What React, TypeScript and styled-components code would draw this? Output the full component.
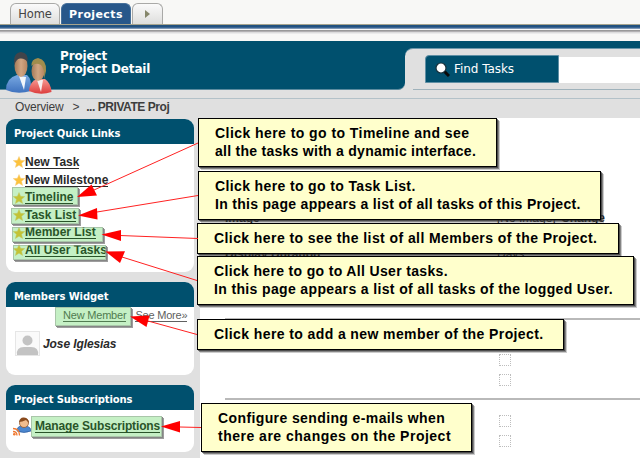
import React from "react";
import styled, { createGlobalStyle } from "styled-components";

const Global = createGlobalStyle`
  * { box-sizing: border-box; }
  body { margin: 0; background: #fff; overflow: hidden; }
`;

const Page = styled.div`
  position: relative;
  width: 640px;
  height: 458px;
  overflow: hidden;
  display: flex;
  flex-direction: column;
  background: #e0e0e0;
  font-family: "Liberation Sans", Arial, sans-serif;
  font-size: 12px;
  color: #2a2a2a;
`;

const TabBar = styled.nav`
  height: 24px;
  flex: none;
  display: flex;
  align-items: flex-end;
  gap: 1px;
  padding-left: 10px;
  background: #f8f8f6;
`;

const Tab = styled.div<{ $w: number; $active?: boolean }>`
  width: ${(p) => p.$w}px;
  height: 21px;
  display: flex;
  align-items: center;
  justify-content: center;
  border: 1px solid ${(p) => (p.$active ? "#456f9a" : "#a9a9a7")};
  border-bottom: 0;
  border-radius: 6px 6px 0 0;
  background: ${(p) => (p.$active ? "#27578a" : "linear-gradient(#fafafa, #dededc)")};
  color: ${(p) => (p.$active ? "#fff" : "#444")};
  font: ${(p) => (p.$active ? "bold 11px" : "11.5px")} "DejaVu Sans", sans-serif;
  letter-spacing: ${(p) => (p.$active ? "0.4px" : "-0.1px")};
`;

const Rule = styled.div`
  height: 17px;
  flex: none;
  background: linear-gradient(
    #a6a48e 0 1px, #23527f 1px 3px, #3a6594 3px 4px, #7d97b5 4px 5px, #f8f8f8 5px 6px,
    #999 6px 7px, #b2b0b2 7px 8px, #dcdcdc 8px 9px, #ebebeb 9px 10px, #f8f8f6 10px
  );
`;

const Header = styled.header`
  height: 49px;
  flex: none;
  display: flex;
  background: linear-gradient(#00506e 0 24px, #e0e0e0 24px);
`;

const TitleBox = styled.div`
  width: 405px;
  height: 49px;
  display: flex;
  gap: 8px;
  padding-left: 4px;
  background: #00506e;
  border-bottom: 1px solid #5b8b9f;
  border-radius: 0 0 7px 0;
`;

const Title = styled.h1`
  margin: 9px 0 0;
  color: #fff;
  font: bold 12px/13px "DejaVu Sans", sans-serif;
  letter-spacing: -0.15px;
`;

const SearchArea = styled.div`
  flex: 1;
  margin-top: 7px;
  padding: 6px 0 0 20px;
  display: flex;
  background: linear-gradient(#9fb2bb, #9fb2bb) 8px 100% / 100% 1px no-repeat, #e0e0e0;
  border-top: 1px solid #6d98ab;
  border-radius: 8px 0 0 0;
`;

const SearchLabel = styled.div`
  width: 134px;
  height: 28px;
  display: flex;
  align-items: center;
  gap: 4px;
  padding-left: 9px;
  background: #00506e;
  border: 1px solid #5f8fa4;
  border-radius: 4px 0 0 0;
  color: #fff;
  font: 12px "DejaVu Sans", sans-serif;
  letter-spacing: -0.05px;
`;

const SearchInput = styled.div`
  flex: 1;
  height: 26px;
  margin-top: 2px;
  background: #fff;
`;

const Crumbs = styled.div`
  height: 28px;
  flex: none;
  display: flex;
  gap: 9px;
  padding: 10px 0 0 15px;
  line-height: 14px;
  letter-spacing: -0.2px;
  color: #3d3d3d;
  background: linear-gradient(transparent 0 8px, #b3c1c8 8px 9px, transparent 9px);
  b { letter-spacing: -0.45px; margin-left: -2px; }
`;

const Columns = styled.div`
  flex: 1;
  display: flex;
`;

const Side = styled.aside`
  width: 200px;
  padding: 1px 6px 0 6px;
  display: flex;
  flex-direction: column;
`;

const Panel = styled.section<{ $h: number; $gap: number }>`
  height: ${(p) => p.$h}px;
  margin-bottom: ${(p) => p.$gap}px;
  flex: none;
  overflow: hidden;
  background: #fff;
  border-radius: 9px;
`;

const PanelTitle = styled.h2`
  height: 25px;
  margin: 0;
  padding: 3px 0 0 8px;
  background: #00506e;
  color: #fff;
  font: bold 10px/23px "DejaVu Sans", sans-serif;
  letter-spacing: -0.1px;
`;

const Links = styled.div`
  display: flex;
  flex-direction: column;
  padding: 9.7px 0 0 7px;
`;

const LinkRow = styled.div`
  height: 17.6px;
  display: flex;
  align-items: center;
`;

const Link = styled.span<{ $ls?: number }>`
  font-weight: bold;
  line-height: 12px;
  white-space: nowrap;
  border-bottom: 1px solid currentColor;
  letter-spacing: ${(p) => p.$ls ?? 0}px;
`;

const MemberLinks = styled.div`
  display: flex;
  gap: 9px;
  padding: 2px 0 0 57px;
  font-size: 11px;
  line-height: 12px;
  letter-spacing: -0.2px;
  color: #606060;
  white-space: nowrap;
  span { border-bottom: 1px solid currentColor; }
`;

const Member = styled.div`
  display: flex;
  align-items: center;
  gap: 3px;
  padding: 9px 0 0 9px;
  font-weight: bold;
  font-style: italic;
  letter-spacing: -0.1px;
`;

const Subscription = styled.div`
  display: flex;
  align-items: center;
  gap: 4px;
  padding: 7px 0 0 7px;
`;

const Content = styled.main`
  flex: 1;
  display: flex;
  flex-direction: column;
  background: #fff;
  padding-left: 25px;
`;

const Field = styled.div<{ $h: number; $top: number }>`
  height: ${(p) => p.$h}px;
  padding-top: ${(p) => p.$top}px;
  flex: none;
  display: grid;
  grid-template-columns: 272px 64px auto;
  line-height: 14px;
  align-items: start;
`;

const Group = styled.div<{ $h: number; $top: number }>`
  height: ${(p) => p.$h}px;
  padding: ${(p) => p.$top}px 0 0 274px;
  flex: none;
  display: flex;
  flex-direction: column;
  gap: 8px;
  border-top: 2px solid #b9b9b9;
`;

const Box = styled.span`
  width: 12px;
  height: 12px;
  border: 1px dotted #bdbdbd;
`;

const Overlay = styled.div<{ $x: number; $y: number; $w: number; $h: number }>`
  position: absolute;
  left: ${(p) => p.$x}px;
  top: ${(p) => p.$y}px;
  width: ${(p) => p.$w}px;
  height: ${(p) => p.$h}px;
`;

const Highlight = styled(Overlay)`
  background: rgba(40, 200, 40, 0.27);
  border: 1px solid rgba(150, 170, 150, 0.6);
  box-shadow: 1px 1px 0 #858585, 2px 2px 0 #9d9d9d;
`;

const Callout = styled(Overlay)`
  padding: 5px 0 0 16px;
  background: #ffffcc;
  border: 1px solid #000;
  box-shadow: 1px 1px 0 rgba(40, 40, 40, 0.6), 2px 2px 0 rgba(60, 60, 60, 0.5), 3px 3px 0 rgba(0, 0, 0, 0.2);
  color: #000;
  font-weight: bold;
  font-size: 14px;
  line-height: 18px;
  white-space: nowrap;
`;

const CalloutLine = styled.div<{ $ls: number }>`
  letter-spacing: ${(p) => p.$ls}px;
`;

const Arrows = styled.svg`
  position: absolute;
  inset: 0;
`;

const PeopleIcon = styled.svg`
  margin-top: 9px;
  flex: none;
`;

const Star = () => (
  <svg width="12" height="12" viewBox="0 0 12 12">
    <path d="M6 .5 7.6 4.3 11.8 4.6 8.6 7.3 9.6 11.5 6 9.2 2.4 11.5 3.4 7.3.2 4.6 4.4 4.3Z" fill="#fdc23c" stroke="#f5cf82" strokeWidth=".5" />
  </svg>
);

const People = () => (
  <PeopleIcon width="48" height="46" viewBox="0 0 48 46">
    <defs>
      <linearGradient id="blue" x2="0" y2="1"><stop stopColor="#79a9e2" /><stop offset="1" stopColor="#3f72be" /></linearGradient>
      <linearGradient id="red" x2="0" y2="1"><stop stopColor="#f79a92" /><stop offset="1" stopColor="#dc3c3c" /></linearGradient>
      <linearGradient id="skin"><stop stopColor="#a57a58" /><stop offset=".5" stopColor="#d0a683" /><stop offset="1" stopColor="#b58560" /></linearGradient>
    </defs>
    <path d="M2 40Q2 28 13 25L23 25Q28 29 27 41Q13 45 2 40Z" fill="url(#blue)" />
    <path d="M15 26 20 40 22 27Z" fill="#f3f7fb" />
    <ellipse cx="17" cy="16" rx="6.500" ry="11" fill="url(#skin)" />
    <path d="M10.500 15Q8.500 3 17 2Q25 3 23.500 12Q21 8 16 8.500Q12 9 10.500 15Z" fill="#41444a" />
    <path d="M25 41Q26 31 33 29L41 29Q47 33 47.500 42Q36 46 25 41Z" fill="url(#red)" />
    <path d="M33 30 37 42 39 30Z" fill="#f8eeee" />
    <ellipse cx="34" cy="21" rx="6.500" ry="10" fill="url(#skin)" />
    <path d="M27.500 16Q27 9 34 8Q43 10 42 21L40 29Q41 19 37 15Q32 12 27.500 16Z" fill="#a08d4d" />
  </PeopleIcon>
);

const Magnifier = () => (
  <svg width="15" height="15" viewBox="0 0 15 15">
    <path d="m9 9 5 5" stroke="#0a0a0a" strokeWidth="3" />
    <circle cx="6" cy="6" r="5" fill="#fff" stroke="#18303a" strokeWidth="1.2" />
  </svg>
);

const Avatar = () => (
  <svg width="25" height="25" viewBox="0 0 25 25">
    <rect x=".5" y=".5" width="24" height="24" fill="#fafafa" stroke="#e6e6e6" />
    <circle cx="12.500" cy="9.500" r="5" fill="#c3c3c3" />
    <path d="M2 24Q1 16 9 16H16Q24 16 23 24Z" fill="#c3c3c3" />
  </svg>
);

const Subscriber = () => (
  <svg width="18" height="19" viewBox="0 0 18 19">
    <path d="M4 14Q4 9 9 9H13Q18 10 18 14Q11 17 4 14Z" fill="#4a86cf" stroke="#2c5a9c" strokeWidth=".7" />
    <circle cx="11" cy="6" r="4.500" fill="#f2bd8e" stroke="#8a4b1d" strokeWidth=".7" />
    <path d="M6 5Q7 0 11 .5Q16 1 16 6L13 3Q9 5 6 5Z" fill="#8a4b1d" />
    <path d="M0 11.500Q6.500 11.500 6.500 18.500M0 14.500Q4 14.500 4 18.500" fill="none" stroke="#f07a32" strokeWidth="1.300" />
    <circle cx="1.300" cy="17.300" r="1.300" fill="#f07a32" />
  </svg>
);

const quickLinks = ["New Task", "New Milestone", "Timeline", "Task List", "Member List", "All User Tasks"];

const highlights = [
  [12, 187, 66, 18],
  [11, 208, 68, 16],
  [12, 227, 91, 15],
  [13, 245, 93, 15],
  [55, 307, 76, 19],
  [31, 416, 131, 21],
];

const callouts: { box: number[]; lines: [string, number][] }[] = [
  { box: [198, 118, 299, 49], lines: [["Click here to go to Timeline and see", 0.44], ["all the tasks with a dynamic interface.", 0.27]] },
  { box: [198, 171, 403, 49], lines: [["Click here to go to Task List.", 0.37], ["In this page appears a list of all tasks of this Project.", 0.3]] },
  { box: [197, 223, 422, 31], lines: [["Click here to see the list of all Members of the Project.", 0.42]] },
  { box: [197, 256, 437, 49], lines: [["Click here to go to All User tasks.", 0.34], ["In this page appears a list of all tasks of the logged User.", 0.36]] },
  { box: [197, 319, 367, 31], lines: [["Click here to add a new member of the Project.", 0.4]] },
  { box: [201, 403, 271, 49], lines: [["Configure sending e-mails when", 0.39], ["there are changes on the Project", 0.5]] },
];

const arrows = [
  { head: "77,197 91.500,184.500 97,195.500", line: [94, 190, 198, 143] },
  { head: "78,215.500 97,208 97.500,219.500", line: [97, 212, 198, 195.5] },
  { head: "101.500,234.500 121,230 121,241", line: [120, 235.5, 198, 238.5] },
  { head: "105.500,251.500 125,251.300 120,263", line: [122, 257, 197, 280.5] },
  { head: "130,316.500 149.500,315.500 146.500,327", line: [148, 321, 197, 334.5] },
  { head: "161,426.500 180,421 180,432.500", line: [180, 427, 201, 427.5] },
];

export default function App() {
  return (
    <Page>
      <Global />
      <TabBar>
        <Tab $w={50}>Home</Tab>
        <Tab $w={70} $active>Projects</Tab>
        <Tab $w={31}>
          <svg width="5" height="8" viewBox="0 0 5 8"><path d="M0 0 5 4 0 8Z" fill="#85866a" /></svg>
        </Tab>
      </TabBar>
      <Rule />
      <Header>
        <TitleBox>
          <People />
          <Title>Project<br />Project Detail</Title>
        </TitleBox>
        <SearchArea>
          <SearchLabel><Magnifier />Find Tasks</SearchLabel>
          <SearchInput />
        </SearchArea>
      </Header>
      <Crumbs><span>Overview</span><span>&gt;</span><b>... PRIVATE Proj</b></Crumbs>
      <Columns>
        <Side>
          <Panel $h={153} $gap={10}>
            <PanelTitle>Project Quick Links</PanelTitle>
            <Links>
              {quickLinks.map((t) => (
                <LinkRow key={t}><Star /><Link>{t}</Link></LinkRow>
              ))}
            </Links>
          </Panel>
          <Panel $h={93} $gap={10}>
            <PanelTitle>Members Widget</PanelTitle>
            <MemberLinks><span>New Member</span><span>See More»</span></MemberLinks>
            <Member><Avatar />Jose Iglesias</Member>
          </Panel>
          <Panel $h={67} $gap={0}>
            <PanelTitle>Project Subscriptions</PanelTitle>
            <Subscription><Subscriber /><Link $ls={-0.15}>Manage Subscriptions</Link></Subscription>
          </Panel>
        </Side>
        <Content>
          <Field $h={124} $top={93}><b>Image</b><span>[No Image]</span><b>Change</b></Field>
          <Field $h={76} $top={5}><b>Display Duration</b><span>Days</span></Field>
          <Group $h={80} $top={34}><Box /><Box /></Group>
          <Group $h={60} $top={15}><Box /><Box /></Group>
        </Content>
      </Columns>
      {highlights.map(([x, y, w, h]) => (
        <Highlight key={y} $x={x} $y={y} $w={w} $h={h} />
      ))}
      {callouts.map(({ box: [x, y, w, h], lines }) => (
        <Callout key={y} $x={x} $y={y} $w={w} $h={h}>
          {lines.map(([text, ls]) => <CalloutLine key={text} $ls={ls}>{text}</CalloutLine>)}
        </Callout>
      ))}
      <Arrows width="640" height="458" viewBox="0 0 640 458">
        {arrows.map(({ head, line: [x1, y1, x2, y2] }) => (
          <g key={head}>
            <line x1={x1} y1={y1} x2={x2} y2={y2} stroke="#f22" strokeWidth="1" />
            <polygon points={head} fill="#f00" />
          </g>
        ))}
      </Arrows>
    </Page>
  );
}
